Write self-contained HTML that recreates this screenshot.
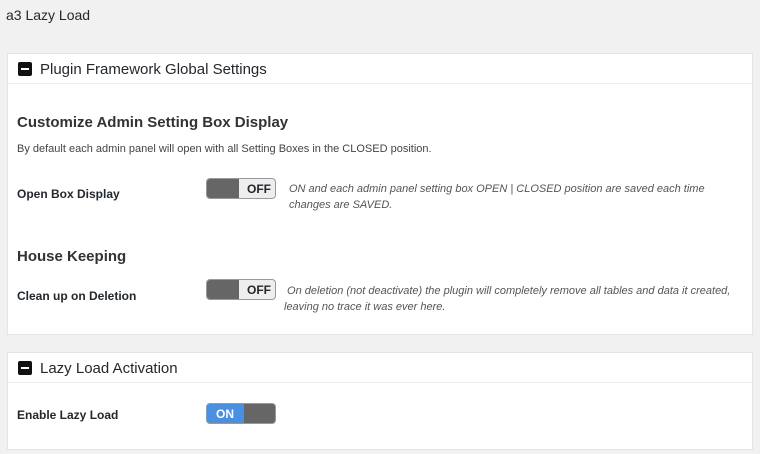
<!DOCTYPE html>
<html><head><style>
body{margin:0;width:760px;height:454px;background:#f1f1f1;font-family:"Liberation Sans",sans-serif;color:#23282d;position:relative;overflow:hidden}
.a{position:absolute;white-space:nowrap}
.box{position:absolute;left:7px;width:744px;background:#fff;border:1px solid #e2e4e7}
.hd{position:absolute;left:0;right:0;top:0;height:29px;border-bottom:1px solid #eee}
.ic{position:absolute;left:10px;top:8px;width:14px;height:14px;background:#111;border-radius:2px}
.ic:after{content:"";position:absolute;left:3px;top:6px;width:8px;height:2px;background:#fff}
.tg{position:absolute;width:68px;height:19px;border:1px solid #999;border-radius:4px;overflow:hidden;background:#eee;font-size:12px;font-weight:bold}
.k{position:absolute;top:0;width:32px;height:19px;background:#666}
.it{font-style:italic;font-size:11px;color:#555;line-height:16px}
.lb{font-size:12px;font-weight:bold;color:#23282d}
</style></head><body>
<div class="a" style="left:6px;top:7px;font-size:14px">a3 Lazy Load</div>
<div class="box" style="top:53px;height:280px">
 <div class="hd"><div class="ic"></div><div class="a" style="left:32px;top:7px;font-size:15px">Plugin Framework Global Settings</div></div>
</div>
<div class="a" style="left:17px;top:114px;font-size:15px;font-weight:bold;color:#333">Customize Admin Setting Box Display</div>
<div class="a" style="left:17px;top:143px;font-size:11px;color:#444">By default each admin panel will open with all Setting Boxes in the CLOSED position.</div>
<div class="a lb" style="left:17px;top:187px">Open Box Display</div>
<div class="tg" style="left:206px;top:178px"><div class="k" style="left:0"></div><div class="a" style="left:40px;top:3px">OFF</div></div>
<div class="a it" style="left:289px;top:181px">ON and each admin panel setting box OPEN | CLOSED position are saved each time<br>changes are SAVED.</div>
<div class="a" style="left:17px;top:248px;font-size:15px;font-weight:bold;color:#333">House Keeping</div>
<div class="a lb" style="left:17px;top:289px">Clean up on Deletion</div>
<div class="tg" style="left:206px;top:279px"><div class="k" style="left:0"></div><div class="a" style="left:40px;top:3px">OFF</div></div>
<div class="a it" style="left:284px;top:283px">&nbsp;On deletion (not deactivate) the plugin will completely remove all tables and data it created,<br>leaving no trace it was ever here.</div>
<div class="box" style="top:352px;height:96px">
 <div class="hd"><div class="ic"></div><div class="a" style="left:32px;top:7px;font-size:15px">Lazy Load Activation</div></div>
</div>
<div class="a lb" style="left:17px;top:408px">Enable Lazy Load</div>
<div class="tg" style="left:206px;top:403px;background:#4a90e2;color:#fff"><div class="k" style="left:37px"></div><div class="a" style="left:9px;top:3px">ON</div></div>
</body></html>
